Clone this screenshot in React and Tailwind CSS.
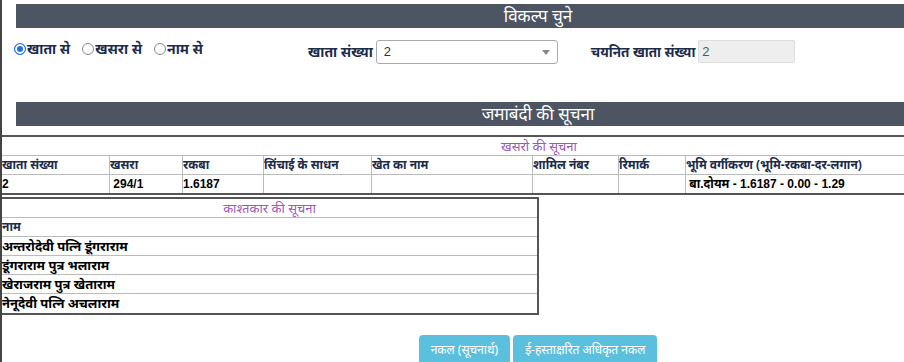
const khasraCols = [
  { w: "w-[108px]", head: "खाता संख्या", val: "2" },
  { w: "w-[73px]", head: "खसरा", val: " 294/1" },
  { w: "w-[81px]", head: "रकबा", val: "1.6187" },
  { w: "w-[108px]", head: "सिंचाई के साधन", val: "" },
  { w: "w-[161px]", head: "खेत का नाम", val: "" },
  { w: "w-[86px]", head: "शामिल नंबर", val: "" },
  { w: "w-[67px]", head: "रिमार्क", val: "" },
  { w: "w-[240px]", head: "भूमि वर्गीकरण (भूमि-रकबा-दर-लगान)", val: " बा.दोयम - 1.6187 - 0.00 - 1.29" },
];

const owners = [
  "अन्तरोदेवी पत्नि डूंगराराम",
  "डूंगराराम पुत्र भलाराम",
  "खेराजराम पुत्र खेताराम",
  "नेनूदेवी पत्नि अचलाराम",
];

function Bar({ title }) {
  return (
    <div className="ml-[14px] h-[24px] bg-[#4d5562] text-white text-[17px] leading-[24px] text-center pl-[156px]">
      {title}
    </div>
  );
}

function Radio({ checked, label }) {
  return (
    <label className="flex items-center mr-[12px]">
      <span
        className={`w-[12px] h-[12px] rounded-full border ${
          checked ? "border-[#1a73e8] bg-[#1a73e8] shadow-[inset_0_0_0_2px_#fff]" : "border-[#888] bg-white"
        }`}
      />
      <span className="ml-[1px] font-bold text-[14px] text-[#1c2b4a]">{label}</span>
    </label>
  );
}

export default function App() {
  return (
    <div className="w-[904px] h-[362px] overflow-hidden bg-white border-l-2 border-[#444] pt-[4px] font-['Noto_Sans',sans-serif]">
      <Bar title="विकल्प चुने" />

      <div className="flex items-start mt-[12px] pl-[12px] h-[24px]">
        <div className="flex items-center w-[294px] -mt-[2px]">
          <Radio checked label="खाता से" />
          <Radio label="खसरा से" />
          <Radio label="नाम से" />
        </div>
        <span className="font-bold text-[14px] text-[#1c2b4a] leading-[24px] mr-[3px]">खाता संख्या</span>
        <div className="w-[182px] h-[24px] border border-[#aaa] rounded-[3px] flex items-center justify-between px-[7px] font-['Liberation_Sans',sans-serif] text-[13px] text-[#333]">
          <span>2</span>
          <span className="w-0 h-0 border-x-[4px] border-x-transparent border-t-[5px] border-t-[#888]" />
        </div>
        <span className="ml-[33px] font-bold text-[13.5px] text-[#1c2b4a] leading-[24px] mr-[3px]">चयनित खाता संख्या</span>
        <div className="w-[97px] h-[23px] border border-[#ddd] bg-[#eee] rounded-[2px] px-[3px] font-['Liberation_Sans',sans-serif] text-[13px] text-[#555] leading-[21px]">
          2
        </div>
      </div>

      <div className="mt-[38px]">
        <Bar title="जमाबंदी की सूचना" />
      </div>

      <div className="mt-[9px] w-[904px] border-y-2 border-[#555]">
        <div className="h-[19px] border-b border-[#bbb] text-center pl-[170px] italic text-[13px] text-[#9b59b6] leading-[19px]">
          खसरो की सूचना
        </div>
        <div className="flex h-[19px] border-b border-[#bbb] text-[12px] font-bold text-[#1c2b4a] leading-[18px]">
          {khasraCols.map((c, i) => (
            <div key={i} className={`${c.w} shrink-0 border-r border-[#bbb] whitespace-nowrap overflow-hidden`}>
              {c.head}
            </div>
          ))}
        </div>
        <div className="flex h-[18px] text-[12px] font-bold text-black leading-[18px] font-['Liberation_Sans','Noto_Sans',sans-serif]">
          {khasraCols.map((c, i) => (
            <div key={i} className={`${c.w} shrink-0 border-r border-[#bbb] whitespace-pre overflow-hidden`}>
              {c.val}
            </div>
          ))}
        </div>
      </div>

      <div className="mt-[2px] w-[537px] border-2 border-l-0 border-[#555]">
        <div className="h-[19px] border-b border-[#bbb] text-center italic text-[13px] text-[#9b59b6] leading-[19px]">
          काश्तकार की सूचना
        </div>
        <div className="h-[19px] border-b border-[#bbb] text-[12px] font-bold text-[#1c2b4a] leading-[18px]">नाम</div>
        {owners.map((o, i) => (
          <div
            key={i}
            className={`h-[19px] text-[13px] font-bold text-black leading-[18px] ${i < owners.length - 1 ? "border-b border-[#bbb]" : ""}`}
          >
            {o}
          </div>
        ))}
      </div>

      <div className="mt-[20px] flex justify-center gap-[3px] pl-[170px]">
        <button className="h-[30px] px-[12px] bg-[#5bc0de] rounded-[4px] text-white text-[12px]">नकल (सूचनार्थ)</button>
        <button className="h-[30px] px-[12px] bg-[#5bc0de] rounded-[4px] text-white text-[12px]">ई-हस्ताक्षरित अधिकृत नकल</button>
      </div>
    </div>
  );
}
